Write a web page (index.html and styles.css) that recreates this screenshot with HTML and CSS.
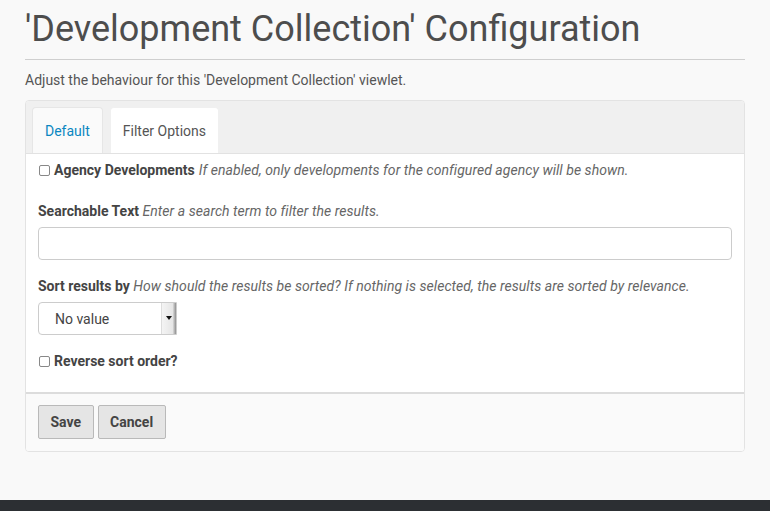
FILE: index.html
```html
<!DOCTYPE html>
<html>
<head>
<meta charset="utf-8">
<link rel="stylesheet" href="styles.css">
</head>
<body>
<main class="page">
  <h1 class="title">'Development Collection' Configuration</h1>
  <p class="lead">Adjust the behaviour for this 'Development Collection' viewlet.</p>
  <form class="panel">
    <div class="tabs">
      <a class="tab">Default</a>
      <a class="tab active">Filter Options</a>
    </div>
    <div class="body">
      <div class="field check first">
        <span class="box"></span>
        <span class="label">Agency Developments</span>
        <span class="help">If enabled, only developments for the configured agency will be shown.</span>
      </div>
      <div class="field">
        <div><span class="label">Searchable Text</span> <span class="help">Enter a search term to filter the results.</span></div>
        <div class="input"></div>
      </div>
      <div class="field">
        <div><span class="label">Sort results by</span> <span class="help">How should the results be sorted? If nothing is selected, the results are sorted by relevance.</span></div>
        <div class="select"><span class="value">No value</span><span class="arrow"></span></div>
      </div>
      <div class="field check last">
        <span class="box"></span>
        <span class="label">Reverse sort order?</span>
      </div>
    </div>
    <div class="footer">
      <button type="button" class="btn">Save</button>
      <button type="button" class="btn">Cancel</button>
    </div>
  </form>
</main>
<footer class="darkbar"></footer>
</body>
</html>
```
FILE: styles.css
```css
html, body { margin: 0; padding: 0; }
body {
  background: #f9f9f9;
  font-family: Roboto, "Liberation Sans", sans-serif;
  color: #4a4a4a;
  width: 770px;
  height: 511px;
  overflow: hidden;
  display: flex;
  flex-direction: column;
}
.page {
  padding: 0 25px;
  flex: 1;
}
.title {
  margin: 0;
  padding: 9px 0 10px;
  font-size: 36px;
  font-weight: 400;
  line-height: 40px;
  color: #4d4d4d;
  border-bottom: 1px solid #cfcfcf;
}
.lead {
  margin: 12px 0 11px;
  font-size: 14px;
  line-height: 17px;
  color: #555;
}
.panel {
  background: #fff;
  border: 1px solid #e3e3e3;
  border-radius: 4px;
  overflow: hidden;
}
.tabs {
  background: #f0f0f0;
  border-bottom: 1px solid #e2e2e2;
  padding: 6px 6px 0;
  display: flex;
  gap: 7px;
  height: 46px;
}
.tab {
  display: flex;
  align-items: center;
  padding: 0 12px;
  font-size: 14px;
  border-radius: 4px 4px 0 0;
  background: #fafafa;
  color: #0a87c1;
  border: 1px solid #e6e6e6;
  border-bottom: none;
}
.tab.active {
  background: #fff;
  color: #555;
  border-color: #f0f0f0;
}
.body {
  padding: 8px 12px 0;
}
.field {
  font-size: 14px;
  line-height: 16px;
  margin-bottom: 18px;
}
.field.first { margin-bottom: 25px; }
.field.last { margin-bottom: 23px; }
.label { font-weight: 700; color: #444; }
.help { font-style: italic; color: #666; font-size: 14px; letter-spacing: 0.05px; }
.check { display: flex; align-items: center; gap: 4px; }
.box {
  width: 11px;
  height: 11px;
  border: 1px solid #888;
  border-radius: 2px;
  background: #fff;
  margin-left: 1px;
  box-sizing: border-box;
}
.input {
  margin-top: 8px;
  height: 33px;
  box-sizing: border-box;
  border: 1px solid #ccc;
  border-radius: 4px;
  background: #fff;
  width: 694px;
}
.select {
  margin-top: 8px;
  width: 139px;
  height: 33px;
  box-sizing: border-box;
  border: 1px solid #ccc;
  border-radius: 4px 0 0 4px;
  display: flex;
  background: #fff;
  overflow: hidden;
}
.select .value {
  flex: 1;
  padding-left: 16px;
  display: flex;
  align-items: center;
  color: #444;
}
.select .arrow {
  width: 14px;
  background: linear-gradient(90deg, #f4f4f4, #e6e6e6 75%, #8f8f8f);
  border-left: 1px solid #ddd;
  position: relative;
}
.select .arrow::after {
  content: "";
  position: absolute;
  left: 4px;
  top: 13px;
  border-left: 3px solid transparent;
  border-right: 3px solid transparent;
  border-top: 4px solid #111;
}
.footer {
  border-top: 2px solid #dcdcdc;
  background: #fafafa;
  padding: 11px 12px 12px;
  display: flex;
  gap: 4px;
}
.btn {
  font-family: Roboto, "Liberation Sans", sans-serif;
  font-weight: 700;
  font-size: 14px;
  color: #444;
  background: #e5e5e5;
  border: 1px solid #b9b9b9;
  border-radius: 2px;
  height: 34px;
  padding: 0 11.5px;
}
.darkbar {
  height: 11px;
  background: #2c2f33;
}
```
